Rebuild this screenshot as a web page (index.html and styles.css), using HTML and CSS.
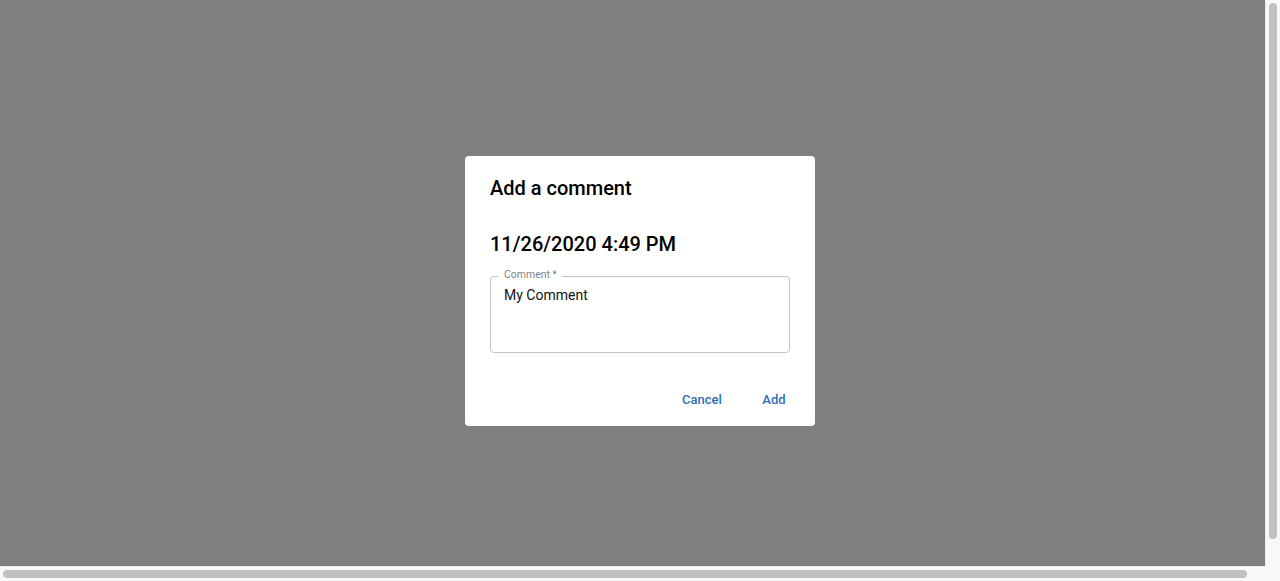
FILE: index.html
```html
<!DOCTYPE html>
<html lang="en">
<head>
<meta charset="utf-8">
<title>Add a comment</title>
<link rel="stylesheet" href="styles.css">
</head>
<body>
<div class="backdrop"></div>
<div class="dialog-layer">
  <div class="dialog" role="dialog" aria-labelledby="dlg-title">
    <h2 class="dialog-title" id="dlg-title">Add a comment</h2>
    <div class="dialog-content">
      <div class="date">11/26/2020 4:49 PM</div>
      <div class="field">
        <label class="field-label" for="comment">Comment&thinsp;*</label>
        <div class="field-box">
          <div class="field-input" id="comment">My Comment</div>
        </div>
      </div>
    </div>
    <div class="dialog-actions">
      <button class="btn" type="button">Cancel</button>
      <button class="btn" type="button">Add</button>
    </div>
  </div>
</div>
<div class="scrollbar scrollbar-v"><div class="thumb thumb-v"></div></div>
<div class="scrollbar scrollbar-h"><div class="thumb thumb-h"></div></div>
<div class="scroll-corner"></div>
</body>
</html>
```
FILE: styles.css
```css
html, body {
  margin: 0;
  padding: 0;
  overflow: hidden;
  background: #ffffff;
  font-family: Roboto, "Liberation Sans", Arial, sans-serif;
}

.backdrop {
  position: fixed;
  top: 0;
  left: 0;
  right: 15px;
  bottom: 15px;
  background: rgba(0, 0, 0, 0.5);
}

.dialog-layer {
  position: fixed;
  inset: 0;
  display: flex;
  align-items: center;
  justify-content: center;
}

.dialog {
  width: 350px;
  background: #ffffff;
  border-radius: 4px;
  display: flex;
  flex-direction: column;
}

.dialog-title {
  margin: 0;
  padding: 16px 25px;
  font-size: 20px;
  line-height: 32px;
  font-weight: 500;
  color: #000000;
}

.dialog-content {
  padding: 8px 25px 13px;
}

.date {
  font-size: 20px;
  line-height: 32px;
  font-weight: 500;
  color: #000000;
}

.field {
  position: relative;
  margin-top: 16px;
  margin-bottom: 8px;
}

.field-label {
  position: absolute;
  left: 8px;
  top: -7px;
  padding: 0 5px 0 6px;
  background: #ffffff;
  font-size: 10.5px;
  line-height: 12px;
  color: rgba(0, 0, 0, 0.54);
}

.field-box {
  box-sizing: border-box;
  height: 77px;
  border: 1px solid rgba(0, 0, 0, 0.23);
  border-radius: 4px;
  padding: 10px 13px;
}

.field-input {
  font-size: 14px;
  line-height: 17px;
  color: #111111;
}

.dialog-actions {
  display: flex;
  justify-content: flex-end;
  gap: 8px;
  padding: 8px 9px 8px 8px;
}

.btn {
  min-width: 64px;
  height: 36px;
  padding: 6px 8px;
  border: 0;
  border-radius: 4px;
  background: transparent;
  font-family: Roboto, "Liberation Sans", Arial, sans-serif;
  font-size: 13px;
  font-weight: 500;
  color: #2e6db4;
  cursor: pointer;
}

.scrollbar {
  position: fixed;
  box-sizing: border-box;
  background: #f8f8f8;
  display: flex;
}

.scrollbar-v {
  top: 0;
  right: 0;
  width: 15px;
  bottom: 15px;
  border-left: 1px solid #ececec;
  padding: 3px 3px 0 3px;
}

.scrollbar-h {
  left: 0;
  bottom: 0;
  right: 15px;
  height: 15px;
  border-top: 1px solid #ececec;
  padding: 3px 0 3px 3px;
}

.thumb {
  background: #c1c1c1;
  border-radius: 4px;
}

.thumb-v {
  width: 8px;
  height: 536px;
}

.thumb-h {
  height: 8px;
  width: 1244px;
}

.scroll-corner {
  position: fixed;
  right: 0;
  bottom: 0;
  width: 15px;
  height: 15px;
  background: #f8f8f8;
}
```
